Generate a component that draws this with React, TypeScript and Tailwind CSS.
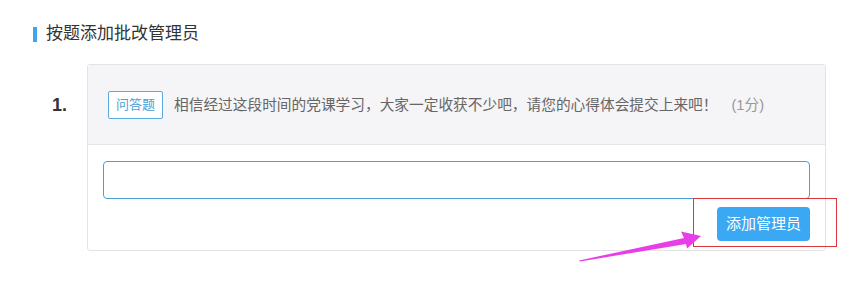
const font = "font-['Liberation_Sans','Noto_Sans_CJK_SC',sans-serif]";

function Arrow() {
  return (
    <svg
      className="pointer-events-none absolute left-[576px] top-[224px]"
      width="130"
      height="42"
      viewBox="0 0 130 42"
    >
      <path
        d="M3 36.5 L108 14 L105 7.5 L125 12 L111 24.5 L110 20 L4 37.5 Z"
        fill="#e83ee8"
      />
    </svg>
  );
}

export default function App() {
  return (
    <div className={`relative h-[284px] w-[852px] bg-white ${font}`}>
      <div className="pl-[33px] pt-[25px]">
        <div className="flex items-center gap-[9px]">
          <span className="h-[15px] w-[4px] bg-[#3ea6ef]" />
          <span className="text-[17px] leading-[18px] text-[#333]">
            按题添加批改管理员
          </span>
        </div>

        <div className="mt-[21px] flex">
          <div className="w-[54px] pl-[19px] pt-[31px] text-[18px] font-bold leading-[20px] text-[#333]">
            1.
          </div>
          <div className="w-[739px] rounded-[3px] border border-[#e3e3e6] bg-white">
            <div className="flex h-[80px] items-center border-b border-[#e6e6e9] bg-[#f5f4f6] pl-[20px]">
              <span className="flex h-[28px] w-[55px] items-center justify-center rounded-[2px] border border-[#5aa9e0] bg-white text-[13px] leading-[16px] text-[#4a9fd8]">
                问答题
              </span>
              <span className="ml-[11px] text-[14.7px] leading-[18px] text-[#666]">
                相信经过这段时间的党课学习，大家一定收获不少吧，请您的心得体会提交上来吧！
              </span>
              <span className="ml-[14px] text-[14.7px] leading-[18px] text-[#999]">
                (1分)
              </span>
            </div>
            <div className="px-[15px] pb-[9px] pt-[16px]">
              <input
                className="block h-[38px] w-full rounded-[4px] border border-[#4a9fd8] bg-white px-3 outline-none"
                type="text"
              />
              <div className="mt-[8px] flex justify-end">
                <button
                  type="button"
                  className="flex h-[34px] w-[93px] items-center justify-center rounded-[4px] bg-[#3aa8f3] text-[15px] leading-[18px] text-white"
                >
                  添加管理员
                </button>
              </div>
            </div>
          </div>
        </div>
      </div>

      <div className="pointer-events-none absolute left-[693px] top-[198px] h-[49px] w-[144px] border border-[#d9363e]" />
      <Arrow />
    </div>
  );
}
